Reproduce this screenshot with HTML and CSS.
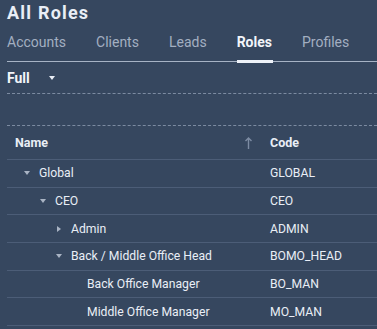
FILE: index.html
```html
<!DOCTYPE html>
<html>
<head>
<meta charset="utf-8">
<link rel="stylesheet" href="styles.css">
</head>
<body>
<div class="page">
  <h1 class="title">All Roles</h1>
  <nav class="tabs">
    <span class="tab">Accounts</span>
    <span class="tab">Clients</span>
    <span class="tab">Leads</span>
    <span class="tab active">Roles</span>
    <span class="tab">Profiles</span>
  </nav>
  <div class="filter">
    <span class="filter-label">Full</span>
    <span class="caret-down filter-caret"></span>
  </div>
  <div class="spacer"></div>
  <div class="table">
    <div class="row head">
      <div class="cell name">Name<span class="sort">
        <svg width="7" height="12" viewBox="0 0 7 12"><path d="M3.5 1 L3.5 12 M0.5 4 L3.5 1 L6.5 4" fill="none" stroke="#7d8ca3" stroke-width="1.4"/></svg>
      </span></div>
      <div class="cell code">Code</div>
    </div>
    <div class="row">
      <div class="cell name lvl0"><span class="toggle"><span class="caret-down"></span></span>Global</div>
      <div class="cell code">GLOBAL</div>
    </div>
    <div class="row">
      <div class="cell name lvl1"><span class="toggle"><span class="caret-down"></span></span>CEO</div>
      <div class="cell code">CEO</div>
    </div>
    <div class="row">
      <div class="cell name lvl2"><span class="toggle"><span class="caret-right"></span></span>Admin</div>
      <div class="cell code">ADMIN</div>
    </div>
    <div class="row">
      <div class="cell name lvl2"><span class="toggle"><span class="caret-down"></span></span>Back / Middle Office Head</div>
      <div class="cell code">BOMO_HEAD</div>
    </div>
    <div class="row">
      <div class="cell name lvl3"><span class="toggle"></span>Back Office Manager</div>
      <div class="cell code">BO_MAN</div>
    </div>
    <div class="row">
      <div class="cell name lvl3"><span class="toggle"></span>Middle Office Manager</div>
      <div class="cell code">MO_MAN</div>
    </div>
  </div>
</div>
</body>
</html>
```
FILE: styles.css
```css
html, body {
  margin: 0;
  padding: 0;
  background: #36475f;
  font-family: Roboto, "Liberation Sans", sans-serif;
  color: #e9eef6;
  overflow: hidden;
}
.page {
  padding-left: 7px;
}
.title {
  margin: 0;
  font-size: 18px;
  font-weight: 700;
  line-height: 26px;
  letter-spacing: 1.2px;
}
.tabs {
  display: flex;
  gap: 30px;
  height: 35px;
  border-bottom: 1px solid #a7b3c5;
  margin-top: 0;
}
.tab {
  font-size: 14px;
  line-height: 32px;
  color: #a3afc1;
  position: relative;
}
.tab.active {
  color: #f2f5fa;
  font-weight: 700;
}
.tab.active::after {
  content: "";
  position: absolute;
  left: 0;
  right: -1px;
  bottom: -2px;
  height: 3px;
  background: #eef2f8;
}
.filter {
  display: flex;
  align-items: center;
  height: 31px;
  border-bottom: 1px dashed #7c8ba1;
}
.filter-label {
  font-size: 14px;
  font-weight: 700;
  color: #f2f5fa;
}
.filter-caret {
  margin-left: 19px;
}
.caret-down {
  display: inline-block;
  width: 0;
  height: 0;
  border-left: 3.5px solid transparent;
  border-right: 3.5px solid transparent;
  border-top: 4px solid #a9b4c4;
}
.filter .caret-down {
  border-top-color: #e9eef6;
}
.caret-right {
  display: inline-block;
  width: 0;
  height: 0;
  border-top: 3.5px solid transparent;
  border-bottom: 3.5px solid transparent;
  border-left: 4px solid #a9b4c4;
}
.spacer {
  height: 31px;
  border-bottom: 1px dashed #7c8ba1;
}
.table {
  display: flex;
  flex-direction: column;
}
.row {
  display: grid;
  grid-template-columns: 255px 1fr;
  height: 27.7px;
  align-items: center;
  border-bottom: 1px solid #4c5d77;
  font-size: 12.2px;
  box-sizing: border-box;
}
.row.head {
  height: 34px;
  font-weight: 700;
  font-size: 12.5px;
}
.cell {
  white-space: nowrap;
}
.cell.name {
  padding-left: 8px;
  display: flex;
  align-items: center;
}
.head .cell.name {
  justify-content: space-between;
}
.sort {
  display: flex;
  margin-right: 10px;
}
.cell.code {
  padding-left: 8px;
}
.toggle {
  display: inline-flex;
  width: 24px;
  justify-content: center;
  align-items: center;
}
.cell.name.lvl1 { padding-left: 24px; }
.cell.name.lvl2 { padding-left: 40px; }
.cell.name.lvl3 { padding-left: 56px; }
```
